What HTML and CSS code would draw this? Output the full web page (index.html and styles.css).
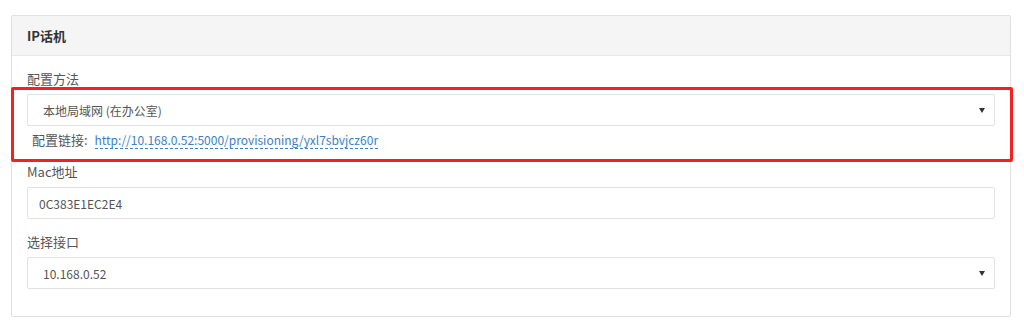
FILE: index.html
```html
<!DOCTYPE html>
<html>
<head>
    <title>IP话机</title>
    <meta charset="UTF-8">
    <link rel="stylesheet" href="styles.css">
</head>
<body>
    <div class="panel">
        <div class="panel-heading">IP话机</div>
        <div class="panel-body">
            <div class="form-group">
                <label for="method">配置方法</label>
                <div class="highlight">
                    <div class="select-wrap">
                        <select id="method">
                            <option>本地局域网 (在办公室)</option>
                        </select>
                    </div>
                    <div class="help">配置链接: <a href="#">http://10.168.0.52:5000/provisioning/yxl7sbvjcz60r</a></div>
                </div>
            </div>
            <div class="form-group">
                <label for="mac">Mac地址</label>
                <input type="text" id="mac" value="0C383E1EC2E4">
            </div>
            <div class="form-group">
                <label for="iface">选择接口</label>
                <div class="select-wrap">
                    <select id="iface">
                        <option>10.168.0.52</option>
                    </select>
                </div>
            </div>
        </div>
    </div>
</body>
</html>
```

FILE: styles.css
```css
body {
    margin: 0;
    padding: 15px 13px 0 11px;
    font-family: "Noto Sans CJK SC", "Open Sans", sans-serif;
    font-size: 13px;
    color: #555;
    background: #fff;
}
.panel {
    border: 1px solid #dde1e3;
    border-radius: 2px;
    height: 302px;
    box-sizing: border-box;
}
.panel-heading {
    height: 39px;
    line-height: 39px;
    padding-left: 15px;
    background: #f5f5f5;
    border-bottom: 1px solid #e6e8ea;
    font-weight: bold;
    color: #333;
}
.panel-body {
    padding: 14px 15px 0 15px;
}
.form-group {
    margin-bottom: 14px;
}
label {
    display: block;
    line-height: 18px;
    margin-bottom: 6px;
    color: #555;
}
.highlight {
    position: relative;
}
.highlight::after {
    content: "";
    position: absolute;
    left: -16px;
    right: -18px;
    top: -7px;
    bottom: -13px;
    border: 3px solid #f4211f;
    border-radius: 2px;
    pointer-events: none;
}
.select-wrap {
    position: relative;
}
.select-wrap::after {
    content: "";
    position: absolute;
    right: 10px;
    top: 14px;
    border-left: 3px solid transparent;
    border-right: 3px solid transparent;
    border-top: 5px solid #333;
}
select, input {
    display: block;
    width: 100%;
    height: 32px;
    box-sizing: border-box;
    border: 1px solid #dfe3e5;
    border-radius: 2px;
    background: #fff;
    font-family: inherit;
    font-size: 12px;
    color: #555;
    outline: none;
}
select {
    -webkit-appearance: none;
    appearance: none;
    padding-left: 15px;
}
input {
    padding-left: 11px;
}
.help {
    line-height: 18px;
    margin-top: 5px;
    padding-left: 5px;
    color: #555;
}
.help a {
    margin-left: 4px;
    font-size: 12px;
    color: #3b7fc4;
    text-decoration: none;
    border-bottom: 1px dashed #3b7fc4;
}
```
